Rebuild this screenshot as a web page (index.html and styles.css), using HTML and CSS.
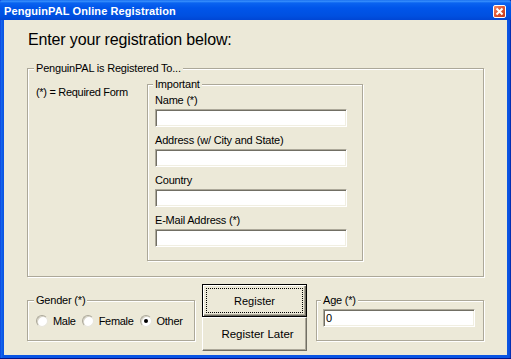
FILE: index.html
```html
<!DOCTYPE html>
<html lang="en">
<head>
    <meta charset="UTF-8">
    <title>PenguinPAL Online Registration</title>
    <link rel="stylesheet" href="styles.css">
</head>
<body>
    <!-- dialog window -->
    <div class="window">
        <div class="titlebar">
            <span class="title">PenguinPAL Online Registration</span>
            <span class="close">
                <svg width="11" height="11" viewBox="0 0 11 11">
                    <path d="M2.5 2.5 L8.5 8.5 M8.5 2.5 L2.5 8.5" stroke="#fff" stroke-width="2" fill="none"/>
                </svg>
            </span>
        </div>
        <div class="client">
            <h1 class="heading">Enter your registration below:</h1>

            <fieldset class="group main">
                <legend>PenguinPAL is Registered To...</legend>
                <div class="main-row">
                    <p class="note">(*) = Required Form</p>
                    <fieldset class="group important">
                        <legend>Important</legend>
                        <label class="field"><span>Name (*)</span><input class="text" type="text"></label>
                        <label class="field"><span>Address (w/ City and State)</span><input class="text" type="text"></label>
                        <label class="field"><span>Country</span><input class="text" type="text"></label>
                        <label class="field"><span>E-Mail Address (*)</span><input class="text" type="text"></label>
                    </fieldset>
                </div>
            </fieldset>

            <div class="bottom">
                <fieldset class="group gender">
                    <legend>Gender (*)</legend>
                    <div class="radios">
                        <label class="opt"><span class="radio"></span>Male</label>
                        <label class="opt"><span class="radio"></span>Female</label>
                        <label class="opt"><span class="radio checked"></span>Other</label>
                    </div>
                </fieldset>
                <div class="buttons">
                    <button class="btn default"><span class="focus">Register</span></button>
                    <button class="btn later">Register Later</button>
                </div>
                <fieldset class="group age">
                    <legend>Age (*)</legend>
                    <input class="text age-input" type="text" value="0">
                </fieldset>
            </div>
        </div>
    </div>
</body>
</html>
```

FILE: styles.css
```css
*{
    margin: 0;
    padding: 0;
    box-sizing: border-box;
}
body{
    width: 511px;
    height: 359px;
    overflow: hidden;
    font-family: "Liberation Sans", Arial, sans-serif;
    font-size: 11px;
    color: #000;
}

/* window frame */
.window{
    width: 511px;
    height: 359px;
    display: flex;
    flex-direction: column;
    padding: 0 4px 4px 4px;
    background: linear-gradient(to right, #0831d9 0, #166aee 1px, #0a55e4 3px, #0a55e4 calc(100% - 3px), #0b4ad8 calc(100% - 1px), #00138c 100%);
    box-shadow: inset 0 -1px 0 #00138c;
}
.titlebar{
    height: 20px;
    margin: 0 -4px;
    display: flex;
    align-items: flex-start;
    justify-content: space-between;
    padding: 3px 5px 0 4px;
    background: linear-gradient(to bottom, #0a5fe8 0, #3d95ff 1px, #0a63f0 3px, #0055ea 8px, #0050e0 16px, #0046d4 20px);
    border-radius: 3px 3px 0 0;
}
.title{
    color: #fff;
    font-weight: bold;
    font-size: 11px;
    line-height: 17px;
    letter-spacing: 0.1px;
}
.close{
    width: 13px;
    height: 13px;
    margin-top: 2px;
    border: 1px solid #fff;
    border-radius: 2px;
    background: linear-gradient(135deg, #f08a68 0, #e05a36 45%, #c4381a 100%);
    display: flex;
    align-items: center;
    justify-content: center;
}
.close svg{
    display: block;
}

/* dialog content */
.client{
    flex: 1;
    background: #ece9d8;
    padding-left: 23px;
}
.heading{
    font-size: 16px;
    font-weight: normal;
    line-height: 19px;
    letter-spacing: -0.15px;
    margin-top: 10px;
    padding-left: 1px;
}

/* group boxes (etched line) */
.group{
    border: 1px solid #aca899;
    box-shadow: 1px 1px 0 #fff, inset 1px 1px 0 #fff;
    min-inline-size: 0;
}
.group legend{
    font-size: 11px;
    line-height: 14px;
    padding: 0 2px;
    margin-left: -2px;
    background: #ece9d8;
    letter-spacing: -0.2px;
}

.main{
    width: 457px;
    margin-top: 12px;
    padding: 2px 0 15px 8px;
}
.main-row{
    display: flex;
    align-items: flex-start;
}
.note{
    width: 111px;
    margin-top: 8px;
    line-height: 14px;
    letter-spacing: -0.3px;
}
.important{
    width: 216px;
    padding: 2px 15px 13px 7px;
}
.field{
    display: block;
    margin-bottom: 6px;
}
.field:last-child{
    margin-bottom: 0;
}
.field span{
    display: block;
    line-height: 14px;
    letter-spacing: -0.2px;
}
.field .text{
    margin-top: 2px;
}

/* sunken text boxes */
.text{
    display: block;
    width: 192px;
    height: 18px;
    border: 1px solid;
    border-color: #aca899 #fff #fff #aca899;
    box-shadow: inset 1px 1px 0 #716f64, inset -1px -1px 0 #f1efe2;
    background: #fff;
    font-family: inherit;
    font-size: 11px;
    padding: 0 2px;
    outline: none;
}

/* bottom row */
.bottom{
    display: flex;
    align-items: flex-start;
    margin-top: 7px;
}
.gender{
    width: 168px;
    margin-top: 9px;
    padding: 7px 0 12px 8px;
}
.radios{
    display: flex;
    align-items: center;
    line-height: 14px;
    letter-spacing: -0.3px;
}
.opt{
    display: flex;
    align-items: center;
    margin-right: 6px;
}
.radio{
    width: 12px;
    height: 12px;
    margin-right: 5px;
    border-radius: 50%;
    background: #fff;
    border: 1px solid;
    border-color: #aca899 #e8e6dc #e8e6dc #aca899;
    box-shadow: inset 1px 1px 0 #d6d3c6;
    position: relative;
}
.radio.checked::after{
    content: "";
    position: absolute;
    left: 3px;
    top: 3px;
    width: 4px;
    height: 4px;
    border-radius: 50%;
    background: #000;
}

.buttons{
    width: 105px;
    margin-left: 7px;
    display: flex;
    flex-direction: column;
}
.btn{
    width: 105px;
    background: #ece9d8;
    font-family: inherit;
    font-size: 11px;
    color: #000;
    border: 1px solid;
    border-color: #fff #716f64 #716f64 #fff;
    box-shadow: inset -1px -1px 0 #aca899;
}
.default{
    height: 33px;
    border: 1px solid #000;
    box-shadow: inset 1px 1px 0 #fff, inset -1px -1px 0 #716f64, inset -2px -2px 0 #aca899;
    padding: 3px;
}
.focus{
    display: flex;
    align-items: center;
    justify-content: center;
    height: 100%;
    border: 1px dotted #000;
}
.later{
    height: 34px;
    font-size: 11.5px;
    padding-left: 6px;
}

.age{
    width: 168px;
    margin-left: 9px;
    margin-top: 9px;
    padding: 2px 8px 13px 6px;
}
.age-input{
    width: 152px;
}
```
